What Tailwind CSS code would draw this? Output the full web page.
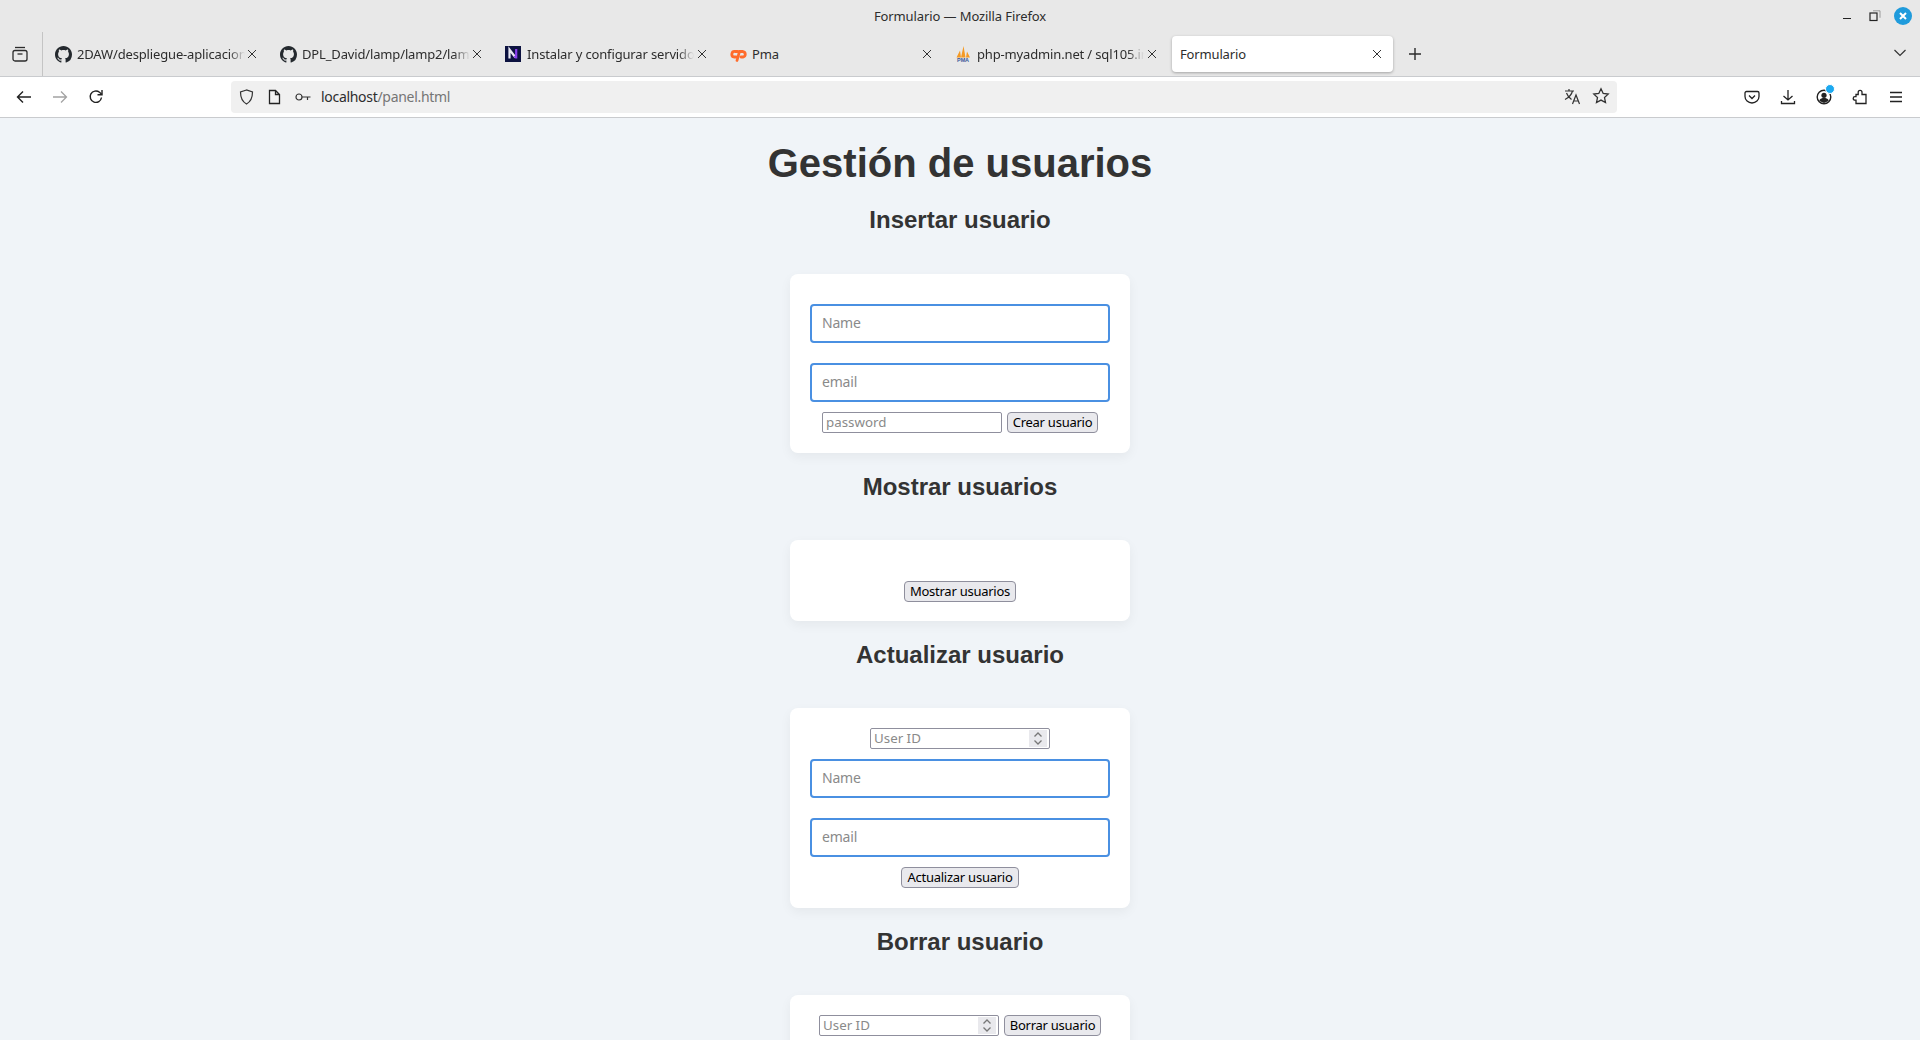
<!DOCTYPE html>
<html lang="es">
<head>
<meta charset="utf-8">
<title>Formulario</title>
<script src="https://cdn.jsdelivr.net/npm/@tailwindcss/browser@4"></script>
</head>
<body class="h-screen overflow-hidden flex flex-col bg-[#f0f4f8] font-['Noto_Sans',sans-serif]">

<!-- window title bar -->
<header class="h-[36px] shrink-0 bg-[#e8e8e8] flex items-start relative">
  <div class="w-full text-center text-[13px] tracking-[-0.1px] leading-[32px] h-[32px] text-[#2d2d2d]">Formulario — Mozilla Firefox</div>
  <div class="absolute right-[8px] top-[7px] flex items-center">
    <span class="w-[28px] h-[18px] flex items-center justify-center">
      <svg width="10" height="10" viewBox="0 0 10 10"><path d="M1 7.500h8" stroke="#222" stroke-width="1"/></svg>
    </span>
    <span class="w-[28px] h-[18px] flex items-center justify-center">
      <svg width="12" height="12" viewBox="0 0 12 12" fill="none"><path d="M4 .8h7v7" stroke="#888" stroke-width=".8"/><rect x="1" y="3" width="7" height="7.500" stroke="#222" stroke-width="1.200"/></svg>
    </span>
    <span class="w-[18px] h-[18px] ml-[5px] rounded-full bg-[#1f9bdc] flex items-center justify-center">
      <svg width="10" height="10" viewBox="0 0 10 10"><path d="M2 2l6 6M8 2l-6 6" stroke="#fff" stroke-width="2"/></svg>
    </span>
  </div>
</header>

<!-- tab strip -->
<div class="h-[41px] shrink-0 bg-[#e8e8e8] border-b border-[#c9cbce] flex items-start relative">
  <div class="w-[43px] h-[44px] mt-[-4px] pr-[3px] border-r border-[#c4c4c4] flex items-center justify-center">
    <svg width="16" height="16" viewBox="0 0 16 16" fill="none" stroke="#2b2b2b" stroke-width="1.300"><path d="M3 1.500h10"/><rect x="1" y="4.500" width="14" height="10.500" rx="2"/><path d="M5.500 8h5"/></svg>
  </div>
  <div class="ml-[2px] flex text-[13px] tracking-[-0.15px] text-[#2d2d2d]">
    <div class="w-[221px] h-[36px] mx-[2px] flex items-center pl-[8px] relative">
      <svg class="shrink-0" width="17" height="17" viewBox="0 0 16 16" fill="#24292e"><path d="M8 0C3.58 0 0 3.58 0 8c0 3.54 2.29 6.53 5.47 7.59.4.07.55-.17.55-.38 0-.19-.01-.82-.01-1.49-2.01.37-2.53-.49-2.69-.94-.09-.23-.48-.94-.82-1.13-.28-.15-.68-.52-.01-.53.63-.01 1.08.58 1.23.82.72 1.21 1.87.87 2.33.66.07-.52.28-.87.51-1.07-1.78-.2-3.64-.89-3.64-3.95 0-.87.31-1.59.82-2.15-.08-.2-.36-1.02.08-2.12 0 0 .67-.21 2.2.82.64-.18 1.32-.27 2-.27.68 0 1.36.09 2 .27 1.53-1.04 2.2-.82 2.2-.82.44 1.1.16 1.92.08 2.12.51.56.82 1.27.82 2.15 0 3.07-1.87 3.75-3.65 3.95.29.25.54.73.54 1.48 0 1.07-.01 1.93-.01 2.2 0 .21.15.46.55.38A8.013 8.013 0 0016 8c0-4.42-3.58-8-8-8z"/></svg>
      <span class="ml-[5px] w-[168px] pt-[1px] overflow-hidden whitespace-nowrap [mask-image:linear-gradient(to_left,transparent,black_16px)]">2DAW/despliegue-aplicacion</span>
      <svg class="absolute right-[11px] top-[13px]" width="10" height="10" viewBox="0 0 10 10"><path d="M1 1l8 8M9 1l-8 8" stroke="#333" stroke-width="1"/></svg>
    </div>
    <div class="w-[221px] h-[36px] mx-[2px] flex items-center pl-[8px] relative">
      <svg class="shrink-0" width="17" height="17" viewBox="0 0 16 16" fill="#24292e"><path d="M8 0C3.58 0 0 3.58 0 8c0 3.54 2.29 6.53 5.47 7.59.4.07.55-.17.55-.38 0-.19-.01-.82-.01-1.49-2.01.37-2.53-.49-2.69-.94-.09-.23-.48-.94-.82-1.13-.28-.15-.68-.52-.01-.53.63-.01 1.08.58 1.23.82.72 1.21 1.87.87 2.33.66.07-.52.28-.87.51-1.07-1.78-.2-3.64-.89-3.64-3.95 0-.87.31-1.59.82-2.15-.08-.2-.36-1.02.08-2.12 0 0 .67-.21 2.2.82.64-.18 1.32-.27 2-.27.68 0 1.36.09 2 .27 1.53-1.04 2.2-.82 2.2-.82.44 1.1.16 1.92.08 2.12.51.56.82 1.27.82 2.15 0 3.07-1.87 3.75-3.65 3.95.29.25.54.73.54 1.48 0 1.07-.01 1.93-.01 2.2 0 .21.15.46.55.38A8.013 8.013 0 0016 8c0-4.42-3.58-8-8-8z"/></svg>
      <span class="ml-[5px] w-[168px] pt-[1px] overflow-hidden whitespace-nowrap [mask-image:linear-gradient(to_left,transparent,black_16px)]">DPL_David/lamp/lamp2/lam</span>
      <svg class="absolute right-[11px] top-[13px]" width="10" height="10" viewBox="0 0 10 10"><path d="M1 1l8 8M9 1l-8 8" stroke="#333" stroke-width="1"/></svg>
    </div>
    <div class="w-[221px] h-[36px] mx-[2px] flex items-center pl-[8px] relative">
      <svg class="shrink-0" width="16" height="16" viewBox="0 0 16 16"><rect width="16" height="16" fill="#0c1240"/><path d="M4.500 12.500v-9l6 8" fill="none" stroke="#e8e8f4" stroke-width="2.200"/><path d="M10.500 11.500l-1-1.500M11.200 3v9.500" fill="none" stroke="#8a3ff0" stroke-width="2.200"/></svg>
      <span class="ml-[6px] w-[167px] pt-[1px] overflow-hidden whitespace-nowrap [mask-image:linear-gradient(to_left,transparent,black_16px)]">Instalar y configurar servidor</span>
      <svg class="absolute right-[11px] top-[13px]" width="10" height="10" viewBox="0 0 10 10"><path d="M1 1l8 8M9 1l-8 8" stroke="#333" stroke-width="1"/></svg>
    </div>
    <div class="w-[221px] h-[36px] mx-[2px] flex items-center pl-[8px] relative">
      <svg class="shrink-0" width="17" height="17" viewBox="0 0 17 17" fill="none" stroke="#ff6c2c" stroke-width="2.800" stroke-linecap="round"><path d="M7.500 5.500H5a2.800 2.800 0 0 0-1 5.500h2"/><path d="M7 14.500L9.500 5.500H13a2.800 2.800 0 0 1 0 5.500h-2"/></svg>
      <span class="ml-[5px] w-[168px] pt-[1px] overflow-hidden whitespace-nowrap">Pma</span>
      <svg class="absolute right-[11px] top-[13px]" width="10" height="10" viewBox="0 0 10 10"><path d="M1 1l8 8M9 1l-8 8" stroke="#333" stroke-width="1"/></svg>
    </div>
    <div class="w-[221px] h-[36px] mx-[2px] flex items-center pl-[8px] relative">
      <svg class="shrink-0" width="16" height="16" viewBox="0 0 16 16"><path d="M1.500 11.500L5 4.500l1 7zM6 11.500L8.500 0l2 11.500zM11 11.500l1-6 3 6z" fill="#f59a23"/><text x="8" y="16" text-anchor="middle" font-family="Liberation Sans" font-weight="700" font-size="5.500" fill="#3b5a9a">PMA</text></svg>
      <span class="ml-[6px] w-[167px] pt-[1px] overflow-hidden whitespace-nowrap [mask-image:linear-gradient(to_left,transparent,black_16px)]">php-myadmin.net / sql105.in</span>
      <svg class="absolute right-[11px] top-[13px]" width="10" height="10" viewBox="0 0 10 10"><path d="M1 1l8 8M9 1l-8 8" stroke="#333" stroke-width="1"/></svg>
    </div>
    <div class="w-[221px] h-[36px] mx-[2px] flex items-center pl-[8px] relative bg-white rounded-[4px] shadow-[0_1px_3px_rgba(0,0,0,0.3)]">
      <span class="pt-[1px]">Formulario</span>
      <svg class="absolute right-[11px] top-[13px]" width="10" height="10" viewBox="0 0 10 10"><path d="M1 1l8 8M9 1l-8 8" stroke="#333" stroke-width="1"/></svg>
    </div>
  </div>
  <svg class="ml-[11px] mt-[9px]" width="18" height="18" viewBox="0 0 18 18"><path d="M9 3v12M3 9h12" stroke="#2b2b2b" stroke-width="1.400"/></svg>
  <svg class="absolute right-[13px] top-[12px]" width="14" height="10" viewBox="0 0 14 10" fill="none"><path d="M1.500 2l5.500 5.500L12.500 2" stroke="#333" stroke-width="1.200"/></svg>
</div>

<!-- navigation bar -->
<nav class="h-[41px] shrink-0 bg-white border-b border-[#c9cbce] flex items-center">
  <div class="w-[231px] shrink-0 flex pl-[6px]">
    <span class="w-[36px] flex justify-center"><svg width="16" height="16" viewBox="0 0 16 16" fill="none" stroke="#222" stroke-width="1.400"><path d="M15 8H1.500M7 2.500L1.500 8 7 13.500"/></svg></span>
    <span class="w-[36px] flex justify-center"><svg width="16" height="16" viewBox="0 0 16 16" fill="none" stroke="#a3a3a3" stroke-width="1.300"><path d="M1 8h13.500M9 2.500L14.500 8 9 13.500"/></svg></span>
    <span class="w-[36px] flex justify-center"><svg width="16" height="16" viewBox="0 0 16 16" fill="none" stroke="#222" stroke-width="1.400"><path d="M13.500 8.500A5.700 5.700 0 1 1 11.500 3.300L14 5.500"/><path d="M14 1v4.800H9.500"/></svg></span>
  </div>
  <div class="w-[1386px] h-[32px] rounded-[4px] bg-[#f0f0f0] flex items-center text-[14px] relative">
    <svg class="ml-[8px]" width="15" height="16" viewBox="0 0 15 16" fill="none" stroke="#333" stroke-width="1.200"><path d="M7.500 1L1.500 3c0 6 1.500 9.500 6 12 4.500-2.500 6-6 6-12z"/></svg>
    <svg class="ml-[14px]" width="13" height="16" viewBox="0 0 13 16" fill="none" stroke="#222" stroke-width="1.300"><path d="M1.500 1.500h6l4 4v9h-10zM7.500 1.500v4h4"/></svg>
    <svg class="ml-[14px]" width="16" height="10" viewBox="0 0 16 10" fill="none" stroke="#333" stroke-width="1.200"><circle cx="4" cy="5" r="3"/><path d="M7 5h8.500M12.500 5v3"/></svg>
    <span class="ml-[10px] pb-[2px] tracking-[-0.3px] text-[#2d2d2d]">localhost<span class="text-[#757575]">/panel.html</span></span>
    <svg class="absolute right-[36px] top-[7px]" width="17" height="17" viewBox="0 0 17 17" fill="none" stroke="#333" stroke-width="1.200"><path d="M1 3h9M5 1v2M8.500 3C7.500 7 5 9.500 1 11.500M2.500 5c1 3 3 5 5 6.500"/><path d="M8.500 16l3.500-9 3.500 9M10 13h4"/></svg>
    <svg class="absolute right-[7px] top-[6px]" width="18" height="18" viewBox="0 0 18 18" fill="none" stroke="#333" stroke-width="1.300"><path d="M9 1.800l2.200 4.700 5 .6-3.700 3.500 1 5L9 13.100l-4.500 2.500 1-5L1.800 7.100l5-.6z"/></svg>
  </div>
  <div class="ml-auto flex items-center pr-[6px]">
    <span class="w-[36px] flex justify-center"><svg width="16" height="16" viewBox="0 0 16 16" fill="none" stroke="#222" stroke-width="1.300"><path d="M2.500 2.500h11A1.500 1.500 0 0 1 15 4v3.500a7 6.500 0 0 1-14 0V4a1.500 1.500 0 0 1 1.500-1.500z"/><path d="M5 6.500L8 9.500l3-3"/></svg></span>
    <span class="w-[36px] flex justify-center"><svg width="16" height="16" viewBox="0 0 16 16" fill="none" stroke="#222" stroke-width="1.300"><path d="M8 1v10M3.500 7L8 11l4.500-4M1.500 12v2.500h13V12"/></svg></span>
    <span class="w-[36px] flex justify-center relative"><svg width="16" height="16" viewBox="0 0 16 16"><circle cx="8" cy="8" r="6.800" fill="none" stroke="#222" stroke-width="1.400"/><circle cx="8" cy="6.300" r="2.600" fill="#222"/><path d="M3.500 11c1-1.500 2.500-2 4.500-2s3.500.5 4.500 2v1l-4.500 2-4.500-2z" fill="#222"/></svg><span class="absolute right-[7px] top-[-5px] w-[8px] h-[8px] rounded-full bg-[#1ca9f0] border border-white box-content"></span></span>
    <span class="w-[36px] flex justify-center"><svg width="16" height="16" viewBox="0 0 16 16" fill="none" stroke="#222" stroke-width="1.300"><path d="M4 5.500h2.200V3.200a1.900 1.900 0 0 1 3.800 0v2.300H14v9H4v-3.300H3a1.800 1.800 0 0 1 0-3.600h1z"/></svg></span>
    <span class="w-[36px] flex justify-center"><svg width="16" height="16" viewBox="0 0 16 16" fill="none" stroke="#222" stroke-width="1.300"><path d="M2 3.500h12M2 8h12M2 12.500h12"/></svg></span>
  </div>
</nav>

<!-- page -->
<main class="flex-1 min-h-0 flex flex-col items-center text-[#333]">
  <h1 class="mt-[20px] text-[40px] leading-[50px] font-bold font-['Liberation_Sans',sans-serif]">Gestión de usuarios</h1>
  <h2 class="mt-[18px] mb-[40px] text-[24px] leading-[28px] font-bold font-['Liberation_Sans',sans-serif]">Insertar usuario</h2>

  <section class="w-[340px] h-[179px] shrink-0 bg-white rounded-[8px] shadow-[0_4px_12px_rgba(0,0,0,0.05)] pt-[30px] flex flex-col items-center">
    <input class="w-[300px] h-[39px] pb-[2px] border-2 border-[#4a90e2] rounded-[4px] px-[10px] text-[14px] tracking-[-0.2px] placeholder:text-[#8a8a8a]" placeholder="Name">
    <input class="w-[300px] h-[39px] pb-[2px] mt-[20px] border-2 border-[#4a90e2] rounded-[4px] px-[10px] text-[14px] tracking-[-0.2px] placeholder:text-[#8a8a8a]" placeholder="email">
    <div class="mt-[10px] flex gap-[5px]">
      <input class="w-[180px] h-[21px] pb-[2px] border border-[#8f8f9d] rounded-[2px] px-[3px] text-[13.33px] placeholder:text-[#8a8a8a]" placeholder="password">
      <button class="w-[91px] h-[21px] pb-[1px] bg-[#e9e9ed] border border-[#8f8f9d] rounded-[4px] text-[13px] tracking-[-0.25px] leading-none text-black">Crear usuario</button>
    </div>
  </section>

  <h2 class="mt-[20px] mb-[39px] text-[24px] leading-[28px] font-bold font-['Liberation_Sans',sans-serif]">Mostrar usuarios</h2>

  <section class="w-[340px] h-[81px] shrink-0 bg-white rounded-[8px] shadow-[0_4px_12px_rgba(0,0,0,0.05)] pt-[41px] flex flex-col items-center">
    <button class="w-[112px] h-[21px] pb-[1px] bg-[#e9e9ed] border border-[#8f8f9d] rounded-[4px] text-[13px] tracking-[-0.25px] leading-none text-black">Mostrar usuarios</button>
  </section>

  <h2 class="mt-[20px] mb-[39px] text-[24px] leading-[28px] font-bold font-['Liberation_Sans',sans-serif]">Actualizar usuario</h2>

  <section class="w-[340px] h-[200px] shrink-0 bg-white rounded-[8px] shadow-[0_4px_12px_rgba(0,0,0,0.05)] pt-[20px] flex flex-col items-center">
    <div class="w-[180px] h-[21px] border border-[#8f8f9d] rounded-[2px] flex items-center pl-[3px] pr-[2px] bg-white">
      <input class="flex-1 min-w-0 h-full pb-[2px] outline-none text-[13.33px] placeholder:text-[#8a8a8a]" placeholder="User ID">
      <svg width="18" height="17" viewBox="0 0 18 17"><rect width="18" height="17" fill="#e9e9ed"/><path d="M5.500 6.500L9 3l3.500 3.500M5.500 10.500L9 14l3.500-3.500" fill="none" stroke="#777" stroke-width="1.300"/></svg>
    </div>
    <input class="w-[300px] h-[39px] pb-[2px] mt-[10px] border-2 border-[#4a90e2] rounded-[4px] px-[10px] text-[14px] tracking-[-0.2px] placeholder:text-[#8a8a8a]" placeholder="Name">
    <input class="w-[300px] h-[39px] pb-[2px] mt-[20px] border-2 border-[#4a90e2] rounded-[4px] px-[10px] text-[14px] tracking-[-0.2px] placeholder:text-[#8a8a8a]" placeholder="email">
    <button class="mt-[10px] w-[118px] h-[21px] pb-[1px] bg-[#e9e9ed] border border-[#8f8f9d] rounded-[4px] text-[13px] tracking-[-0.25px] leading-none text-black">Actualizar usuario</button>
  </section>

  <h2 class="mt-[20px] mb-[39px] text-[24px] leading-[28px] font-bold font-['Liberation_Sans',sans-serif]">Borrar usuario</h2>

  <section class="w-[340px] h-[80px] shrink-0 bg-white rounded-[8px] shadow-[0_4px_12px_rgba(0,0,0,0.05)] pt-[20px] flex justify-center gap-[5px]">
    <div class="w-[180px] h-[21px] border border-[#8f8f9d] rounded-[2px] flex items-center pl-[3px] pr-[2px] bg-white">
      <input class="flex-1 min-w-0 h-full pb-[2px] outline-none text-[13.33px] placeholder:text-[#8a8a8a]" placeholder="User ID">
      <svg width="18" height="17" viewBox="0 0 18 17"><rect width="18" height="17" fill="#e9e9ed"/><path d="M5.500 6.500L9 3l3.500 3.500M5.500 10.500L9 14l3.500-3.500" fill="none" stroke="#777" stroke-width="1.300"/></svg>
    </div>
    <button class="w-[97px] h-[21px] pb-[1px] bg-[#e9e9ed] border border-[#8f8f9d] rounded-[4px] text-[13px] tracking-[-0.25px] leading-none text-black">Borrar usuario</button>
  </section>
</main>
</body>
</html>
